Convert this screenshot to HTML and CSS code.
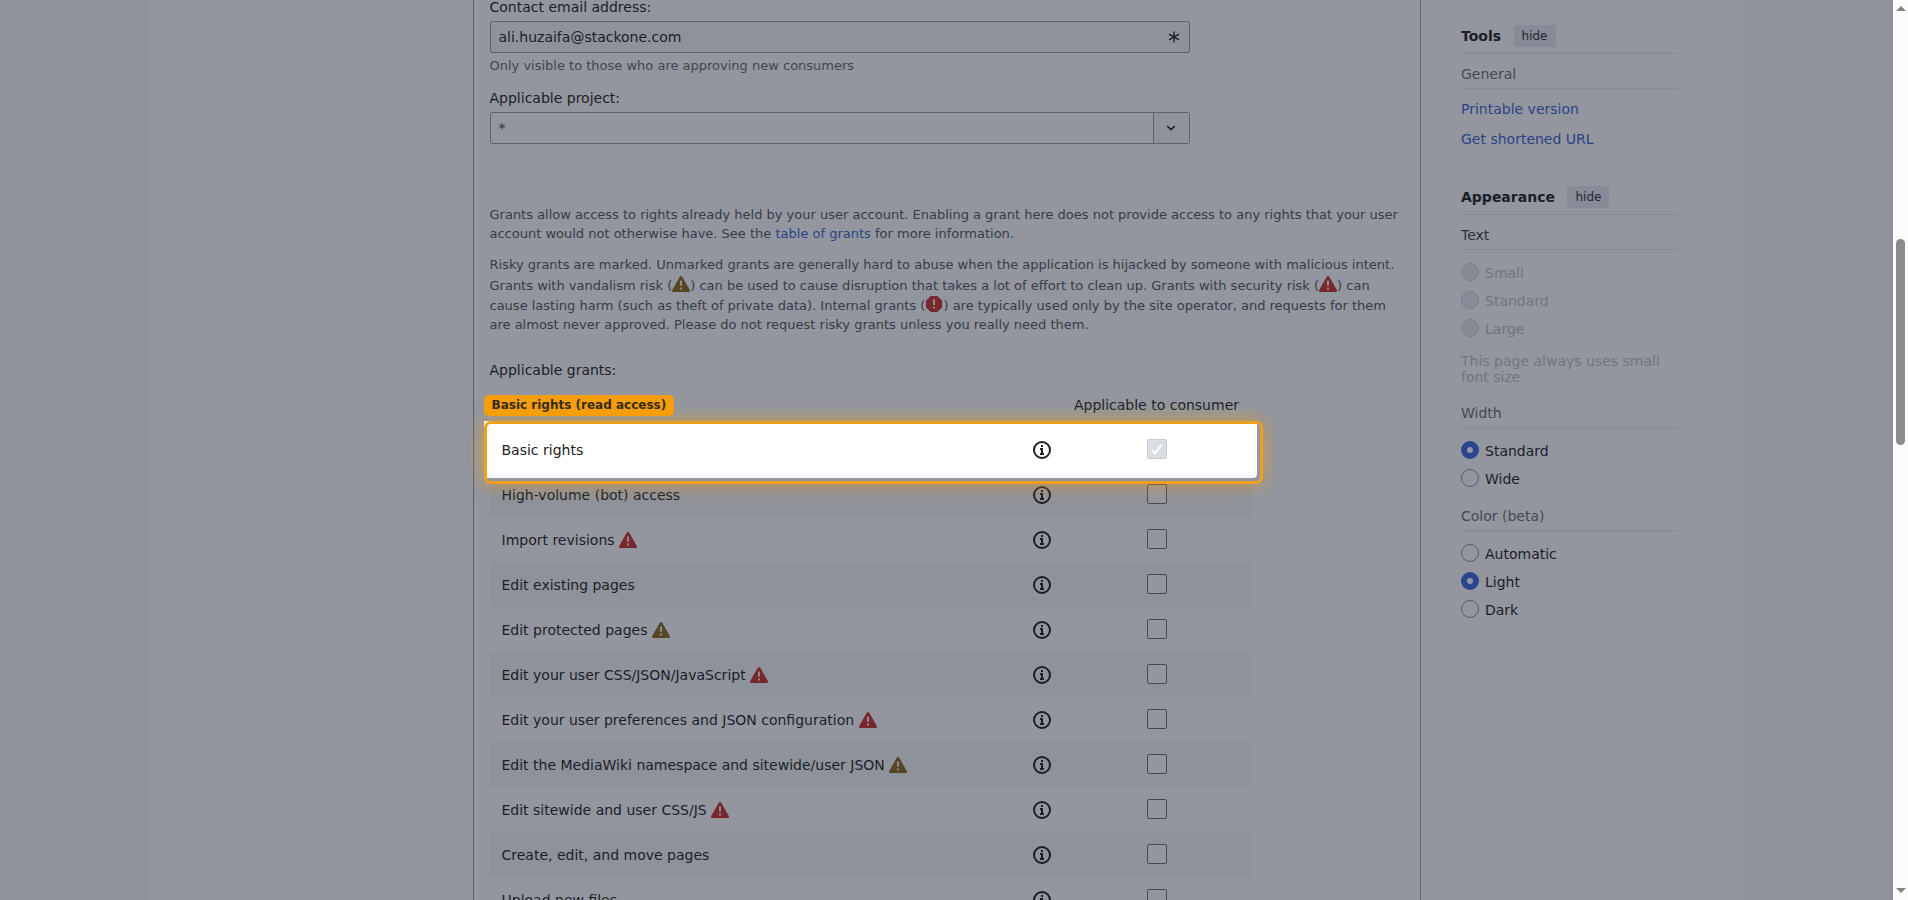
FILE: index.html
```html
<!DOCTYPE html>
<html lang="en">
<head>
  <meta charset="UTF-8" />
  <meta name="viewport" content="width=device-width, initial-scale=1.0" />
  <title>OAuth consumer registration</title>
  <link rel="stylesheet" href="styles.css">
</head>
<body>
  <svg class="sprite" width="0" height="0">
    <symbol id="alert" viewBox="0 0 20 20"><path d="M11.53 2.3A1.85 1.85 0 0 0 10 1.21 1.85 1.85 0 0 0 8.48 2.3L.36 16.36C-.48 17.81.21 19 1.88 19h16.24c1.67 0 2.36-1.19 1.52-2.64zM11 16H9v-2h2zm0-4H9V6h2z"/></symbol>
    <symbol id="error" viewBox="0 0 20 20"><path d="M13.73 1H6.27L1 6.27v7.46L6.27 19h7.46L19 13.73V6.27zM11 15H9v-2h2zm0-4H9V5h2z"/></symbol>
    <symbol id="info" viewBox="0 0 20 20"><circle cx="10" cy="10" r="8" fill="none" stroke="currentColor" stroke-width="2"/><path d="M9 5h2v2H9zM8 8h3v5h1v2H8v-2h1v-3H8z"/></symbol>
  </svg>

  <div class="page">
    <main class="form">
      <label class="label">Contact email address:</label>
      <div class="input readonly">
        <span>ali.huzaifa@stackone.com</span>
        <svg class="required" viewBox="0 0 12 12"><path d="M6 .5v11M1 3.2l10 5.6M11 3.2L1 8.8"/></svg>
      </div>
      <p class="help">Only visible to those who are approving new consumers</p>

      <label class="label project">Applicable project:</label>
      <div class="input select">
        <span>*</span>
        <div class="arrow"><svg viewBox="0 0 10 6"><path d="M1.2 1L5 4.6 8.8 1"/></svg></div>
      </div>

      <div class="notes">
        <p>Grants allow access to rights already held by your user account. Enabling a grant here does not provide access to any rights that your user<br>account would not otherwise have. See the <a href="#">table of grants</a> for more information.</p>
        <p>Risky grants are marked. Unmarked grants are generally hard to abuse when the application is hijacked by someone with malicious intent.<br>Grants with vandalism risk (<svg class="icon warn"><use href="#alert"/></svg>) can be used to cause disruption that takes a lot of effort to clean up. Grants with security risk (<svg class="icon risk"><use href="#alert"/></svg>) can<br>cause lasting harm (such as theft of private data). Internal grants (<svg class="icon risk"><use href="#error"/></svg>) are typically used only by the site operator, and requests for them<br>are almost never approved. Please do not request risky grants unless you really need them.</p>
      </div>

      <div class="label">Applicable grants:</div>
      <div class="grants">
        <div class="head">
          <span class="tag">Basic rights (read access)</span>
          <span class="col">Applicable to consumer</span>
        </div>
        <div class="row spotlight">
          <span class="name">Basic rights</span>
          <svg class="info"><use href="#info"/></svg>
          <span class="check disabled"><svg viewBox="0 0 18 18"><path d="M4 10l3 3.5L13.5 4.5"/></svg></span>
        </div>
        <div class="row">
          <span class="name">High-volume (bot) access</span>
          <svg class="info"><use href="#info"/></svg>
          <span class="check"></span>
        </div>
        <div class="row">
          <span class="name">Import revisions <svg class="icon risk"><use href="#alert"/></svg></span>
          <svg class="info"><use href="#info"/></svg>
          <span class="check"></span>
        </div>
        <div class="row">
          <span class="name">Edit existing pages</span>
          <svg class="info"><use href="#info"/></svg>
          <span class="check"></span>
        </div>
        <div class="row">
          <span class="name">Edit protected pages <svg class="icon warn"><use href="#alert"/></svg></span>
          <svg class="info"><use href="#info"/></svg>
          <span class="check"></span>
        </div>
        <div class="row">
          <span class="name">Edit your user CSS/JSON/JavaScript <svg class="icon risk"><use href="#alert"/></svg></span>
          <svg class="info"><use href="#info"/></svg>
          <span class="check"></span>
        </div>
        <div class="row">
          <span class="name">Edit your user preferences and JSON configuration <svg class="icon risk"><use href="#alert"/></svg></span>
          <svg class="info"><use href="#info"/></svg>
          <span class="check"></span>
        </div>
        <div class="row">
          <span class="name">Edit the MediaWiki namespace and sitewide/user JSON <svg class="icon warn"><use href="#alert"/></svg></span>
          <svg class="info"><use href="#info"/></svg>
          <span class="check"></span>
        </div>
        <div class="row">
          <span class="name">Edit sitewide and user CSS/JS <svg class="icon risk"><use href="#alert"/></svg></span>
          <svg class="info"><use href="#info"/></svg>
          <span class="check"></span>
        </div>
        <div class="row">
          <span class="name">Create, edit, and move pages</span>
          <svg class="info"><use href="#info"/></svg>
          <span class="check"></span>
        </div>
        <div class="row">
          <span class="name">Upload new files</span>
          <svg class="info"><use href="#info"/></svg>
          <span class="check"></span>
        </div>
      </div>
    </main>

    <aside class="side">
      <section class="tools">
        <h2>Tools <button>hide</button></h2>
        <h3>General</h3>
        <ul>
          <li><a href="#">Printable version</a></li>
          <li><a href="#">Get shortened URL</a></li>
        </ul>
      </section>
      <section>
        <h2>Appearance <button>hide</button></h2>
        <h3 class="dark">Text</h3>
        <div class="radios off">
          <div class="radio"><i></i>Small</div>
          <div class="radio"><i></i>Standard</div>
          <div class="radio"><i></i>Large</div>
        </div>
        <p class="note">This page always uses small font size</p>
        <h3>Width</h3>
        <div class="radios">
          <div class="radio"><i class="on"></i>Standard</div>
          <div class="radio"><i></i>Wide</div>
        </div>
        <h3 class="color">Color (beta)</h3>
        <div class="radios">
          <div class="radio"><i></i>Automatic</div>
          <div class="radio"><i class="on"></i>Light</div>
          <div class="radio"><i></i>Dark</div>
        </div>
      </section>
    </aside>
  </div>

  <div class="scrollbar">
    <span class="up"></span>
    <span class="thumb"></span>
    <span class="down"></span>
  </div>
</body>
</html>
```

FILE: styles.css
```css
* {
  box-sizing: border-box;
}

body {
  margin: 0;
  height: 900px;
  overflow: hidden;
  display: flex;
  justify-content: space-between;
  padding-left: 148px;
  background: #8e929b;
  color: #1b1e28;
  font-family: 'DejaVu Sans', sans-serif;
  font-size: 14px;
  line-height: 20px;
}

.sprite {
  position: absolute;
}

p, h2, h3, ul {
  margin: 0;
  padding: 0;
}

a {
  color: #2a4385;
  text-decoration: none;
}

.page {
  display: flex;
  width: 1597px;
  height: 900px;
  padding-left: 325px;
  background: #93969f;
}

/* registration form */
.form {
  width: 948px;
  height: 910px;
  margin-top: -3px;
  padding-left: 15.5px;
  border: 1px solid #60636d;
  border-width: 0 1px;
}

.label {
  display: block;
}

.input {
  display: flex;
  align-items: center;
  justify-content: space-between;
  width: 700px;
  height: 32px;
  margin-top: 4px;
  padding-left: 8px;
  border: 1px solid #60636d;
  border-radius: 2px;
}

.readonly {
  background: #8e929b;
}

.required {
  width: 12px;
  height: 12px;
  margin-right: 9px;
  fill: none;
  stroke: #1b1e28;
  stroke-width: 1.4;
}

.select span {
  color: #2d303a;
}

.arrow {
  display: flex;
  align-items: center;
  width: 36px;
  height: 100%;
  padding-left: 12px;
  border-left: 1px solid #60636d;
  background: #90939d;
}

.arrow svg {
  width: 10px;
  height: 6px;
  fill: none;
  stroke: #1b1e28;
  stroke-width: 1.6;
}

.help {
  margin-top: 3px;
  font-size: 13px;
  line-height: 19px;
  color: #414551;
}

.project {
  margin-top: 13px;
}

.notes {
  margin: 61px 0 26px;
  font-size: 13px;
  line-height: 19px;
  color: #373b47;
  white-space: nowrap;
}

.notes p + p {
  margin-top: 12px;
}

.icon {
  width: 18px;
  height: 18px;
  vertical-align: -3px;
}

.notes .warn {
  margin-top: 1px;
}

.warn {
  fill: #554624;
}

.risk {
  fill: #78282d;
}

/* grants table */
.grants {
  width: 761px;
  margin-top: 14px;
}

.head {
  display: flex;
  justify-content: space-between;
  height: 33px;
  padding-right: 11.5px;
}

.col {
  padding-top: 1px;
}

.tag {
  height: 21px;
  margin: 1px 0 0 -5.5px;
  padding: 0 8px 0 7.5px;
  border-radius: 5px;
  background: #f59e0b;
  font-size: 12px;
  font-weight: bold;
  color: #332a1c;
}

.row {
  display: grid;
  grid-template-columns: 530px 20px 95px 20px;
  align-items: center;
  height: 45px;
  padding-left: 12px;
}

.row:nth-child(odd) {
  background: #8e929b;
}

.name {
  line-height: 18px;
  white-space: nowrap;
}

.name .icon {
  vertical-align: -4px;
}

.info {
  width: 20px;
  height: 20px;
  margin-top: 1px;
  fill: currentColor;
}

.check {
  grid-column: 4;
  width: 20px;
  height: 20px;
  margin-top: -1px;
  border: 1px solid #464954;
  border-radius: 2px;
  background: #93969f;
}

.check.disabled {
  border-color: #c8ccd1;
  background: #dadde3;
}

.check svg {
  display: block;
  fill: none;
  stroke: #fff;
  stroke-width: 1.8;
}

.spotlight {
  position: relative;
  isolation: isolate;
  color: #202122;
}

.spotlight::before {
  content: '';
  position: absolute;
  inset: -6px;
  z-index: -1;
  background: linear-gradient(#fff 51px, #f8f9fc 51px);
}

.spotlight::after {
  content: '';
  position: absolute;
  inset: -6px -12px -12px -6px;
  border: 3px solid #eca01b;
  border-radius: 7px;
  box-shadow: 0 0 18px rgba(245, 158, 11, 0.6), inset -3px -3px #93969f;
}

/* right column */
.side {
  width: 216px;
  margin-left: 40px;
  padding-top: 25px;
}

.tools {
  height: 161px;
}

h2 {
  display: flex;
  align-items: center;
  gap: 12.5px;
  height: 29px;
  padding-bottom: 7px;
  border-bottom: 1px solid #858993;
  font-size: 14px;
}

button {
  height: 22px;
  padding: 0 8px;
  border: 0;
  border-radius: 2px;
  background: #878b98;
  color: #23262f;
  font: 12px 'DejaVu Sans', sans-serif;
}

h3 {
  height: 35px;
  padding-top: 10px;
  border-bottom: 1px solid #858993;
  font-size: 14px;
  font-weight: normal;
  color: #454852;
}

.dark {
  color: #2d303a;
}

.color {
  margin-top: -1px;
}

ul {
  padding-top: 10px;
  list-style: none;
}

li {
  height: 30px;
}

.radios {
  padding-top: 13px;
}

.radio {
  display: flex;
  gap: 6px;
  height: 28px;
}

.radio i {
  width: 18px;
  height: 18px;
  border: 1px solid #595c66;
  border-radius: 50%;
}

.radio .on {
  border: 6px solid #29458f;
}

.off, .note {
  color: #707480;
}

.off i {
  border-color: #7b7f8b;
  background: #878a97;
}

.note {
  margin: 6px 0 8px;
  line-height: 16px;
}

.scrollbar {
  display: flex;
  flex-direction: column;
  align-items: center;
  width: 15px;
  height: 900px;
  padding: 6px 0 7px;
  background: #fcfcfc;
}

.up, .down {
  border: 5px solid transparent;
}

.up {
  border-top: 0;
  border-bottom-color: #858585;
}

.down {
  margin-top: auto;
  border-bottom: 0;
  border-top-color: #858585;
}

.thumb {
  width: 9px;
  height: 206px;
  margin-top: 228px;
  border-radius: 5px;
  background: #8b8b8b;
}
```
